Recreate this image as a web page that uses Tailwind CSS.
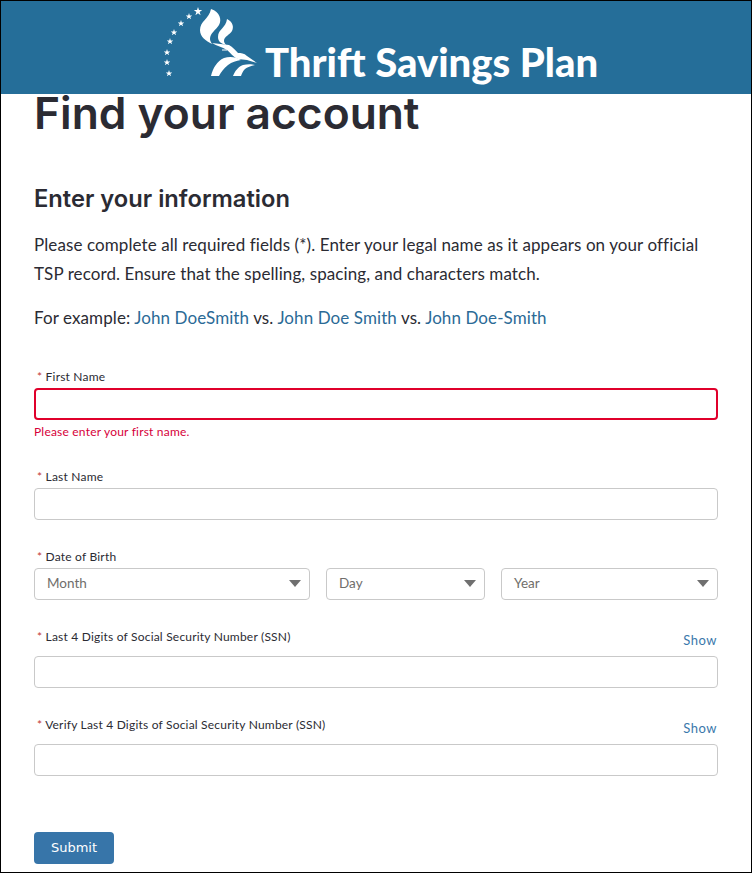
<!DOCTYPE html>
<html lang="en">
<head>
    <meta charset="UTF-8">
    <meta name="viewport" content="width=device-width, initial-scale=1.0">
    <title>Find your account</title>
    <script src="https://cdn.jsdelivr.net/npm/@tailwindcss/browser@4"></script>
</head>
<body class="bg-white font-['Lato',sans-serif] text-[#2b2b33]">
    <div class="h-[873px] overflow-hidden border border-black">
        <!-- Header -->
        <header class="h-[93px] bg-[#256e99] flex pl-[154px]">
            <svg class="w-[110px] h-[85px] shrink-0" viewBox="0 0 110 85" fill="#fff">
                <path d="M43 6l1 3 3.200 0-2.600 2 1 3.200-2.600-1.900-2.600 1.900 1-3.200-2.600-2 3.200 0zM34 12l.8 2.400 2.500 0-2 1.500.8 2.400-2.100-1.500-2.100 1.500.8-2.400-2-1.500 2.500 0zM26 19l.8 2.400 2.500 0-2 1.500.8 2.400-2.100-1.500-2.100 1.500.8-2.400-2-1.500 2.500 0zM19 28l.8 2.400 2.500 0-2 1.500.8 2.400-2.100-1.500-2.100 1.500.8-2.400-2-1.500 2.500 0zM15 37l.8 2.400 2.500 0-2 1.500.8 2.400-2.100-1.500-2.100 1.500.8-2.400-2-1.500 2.500 0zM12 48l.8 2.400 2.500 0-2 1.500.8 2.400-2.100-1.500-2.100 1.500.8-2.400-2-1.500 2.500 0zM12 58l.8 2.400 2.500 0-2 1.500.8 2.400-2.100-1.500-2.100 1.500.8-2.400-2-1.500 2.500 0zM14 69l.8 2.400 2.500 0-2 1.500.8 2.400-2.100-1.500-2.100 1.500.8-2.400-2-1.500 2.500 0z"/>
                <path d="M56 8c9 3 11 11 8 16-3 5-9 8-9 14 0 2 1 3 2 5-6-3-12-7-12-14 0-9 9-11 11-21z"/>
                <path d="M72 18c6 3 7 8 5 12-2 4-8 5-8 10 0 1 1 3 2 4-4-1-8-3-8-8 0-8 8-9 9-18z"/>
                <path d="M57 42c5 1 12 1 17 2 4 2 6 5 9 8 3 0 6 0 9 3l10 7-10-3-9-1c-5-2-7-6-11-9-5-3-10-4-15-7z"/>
                <path d="M67 48.500h5v1h-5zM56 75c2-8 6-15 13-18 6-2 12-1 17 2-5 1-9 2-13 5-4 3-7 7-9 11zM78 75c2-5 5-9 10-11 4-1 9-1 12 0-4 1-8 2-10 4-2 2-3 4-4 7z"/>
            </svg>
            <div class="mt-[36px] font-['Lato',sans-serif] font-black text-[40px] leading-[50px] text-white whitespace-nowrap">Thrift Savings Plan</div>
        </header>

        <main class="px-[33px]">
            <h1 class="text-[44.300px] leading-[40px] font-['Inter',sans-serif] font-semibold -mt-[1px]">Find your account</h1>
            <h2 class="text-[23.700px] leading-[30px] font-['Inter',sans-serif] font-semibold mt-[51px]">Enter your information</h2>
            <p class="text-[17px] leading-[28.500px] tracking-[0.09px] mt-[17px]">Please complete all required fields (*). Enter your legal name as it appears on your official TSP record. Ensure that the spelling, spacing, and characters match.</p>
            <p class="text-[17px] leading-[29px] tracking-[0.09px] mt-[15px]">For example: <span class="text-[#2b6a96]">John DoeSmith</span> vs. <span class="text-[#2b6a96]">John Doe Smith</span> vs. <span class="text-[#2b6a96]">John Doe-Smith</span></p>

            <form class="mt-[36px]">
                <!-- First name -->
                <label class="block text-[12px] leading-[18px] tracking-[0.2px] pl-[3px]"><span class="text-[#c23934]">*</span> First Name</label>
                <div class="h-[32px] mt-[2px] border-2 border-[#e0002b] rounded"></div>
                <p class="text-[12px] leading-[18px] tracking-[0.2px] mt-[3px] text-[#d6003a]">Please enter your first name.</p>

                <!-- Last name -->
                <label class="block text-[12px] leading-[18px] tracking-[0.2px] pl-[3px] mt-[27px]"><span class="text-[#c23934]">*</span> Last Name</label>
                <div class="h-[32px] mt-[2px] border border-[#c9c9c9] rounded"></div>

                <!-- Date of birth -->
                <label class="block text-[12px] leading-[18px] tracking-[0.2px] pl-[3px] mt-[28px]"><span class="text-[#c23934]">*</span> Date of Birth</label>
                <div class="grid grid-cols-[276px_159px_217px] gap-x-4 mt-[2px]">
                    <div class="h-[32px] border border-[#c9c9c9] rounded flex items-center justify-between pl-3 pr-[8px] pb-px text-[13.500px] text-[#706e6b]">Month<span class="w-0 h-0 border-x-[6px] border-x-transparent border-t-[7px] border-t-[#6f6f6f]"></span></div>
                    <div class="h-[32px] border border-[#c9c9c9] rounded flex items-center justify-between pl-3 pr-[8px] pb-px text-[13.500px] text-[#706e6b]">Day<span class="w-0 h-0 border-x-[6px] border-x-transparent border-t-[7px] border-t-[#6f6f6f]"></span></div>
                    <div class="h-[32px] border border-[#c9c9c9] rounded flex items-center justify-between pl-3 pr-[8px] pb-px text-[13.500px] text-[#706e6b]">Year<span class="w-0 h-0 border-x-[6px] border-x-transparent border-t-[7px] border-t-[#6f6f6f]"></span></div>
                </div>

                <!-- SSN -->
                <div class="flex justify-between items-start mt-[28px] h-[28px]">
                    <label class="block text-[12px] leading-[18px] tracking-[0.2px] pl-[3px]"><span class="text-[#c23934]">*</span> Last 4 Digits of Social Security Number (SSN)</label>
                    <span class="text-[13px] leading-[18px] tracking-[0.5px] mt-[3px] mr-px text-[#3a78ab]">Show</span>
                </div>
                <div class="h-[32px] border border-[#c9c9c9] rounded"></div>

                <div class="flex justify-between items-start mt-[28px] h-[28px]">
                    <label class="block text-[12px] leading-[18px] tracking-[0.2px] pl-[3px]"><span class="text-[#c23934]">*</span> Verify Last 4 Digits of Social Security Number (SSN)</label>
                    <span class="text-[13px] leading-[18px] tracking-[0.5px] mt-[3px] mr-px text-[#3a78ab]">Show</span>
                </div>
                <div class="h-[32px] border border-[#c9c9c9] rounded"></div>

                <button type="button" class="block w-[80px] h-[32px] mt-[56px] rounded bg-[#3775a9] text-white text-[13px] font-['DejaVu_Sans',sans-serif]">Submit</button>
            </form>
        </main>
    </div>
</body>
</html>
